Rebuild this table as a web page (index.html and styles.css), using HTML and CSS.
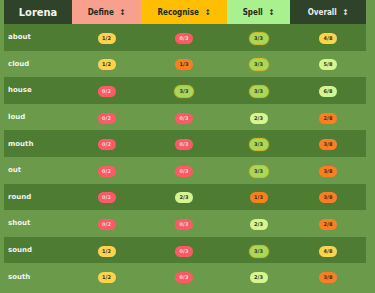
FILE: index.html
```html
<!DOCTYPE html>
<html>
<head>
<meta charset="utf-8">
<link rel="stylesheet" href="styles.css">
</head>
<body>
<table class="grid">
  <colgroup>
    <col class="c-name"><col class="c-def"><col class="c-rec"><col class="c-spell"><col class="c-all">
  </colgroup>
  <thead>
    <tr>
      <th class="h-name">Lorena</th>
      <th class="h-def">Define <span class="sort">↕</span></th>
      <th class="h-rec">Recognise <span class="sort">↕</span></th>
      <th class="h-spell">Spell <span class="sort">↕</span></th>
      <th class="h-all">Overall <span class="sort">↕</span></th>
    </tr>
  </thead>
  <tbody>
    <tr><td class="word">about</td><td><span class="b yel">1/2</span></td><td><span class="b red">0/3</span></td><td><span class="b glow">3/3</span></td><td><span class="b yel">4/8</span></td></tr>
    <tr><td class="word">cloud</td><td><span class="b yel">1/2</span></td><td><span class="b org">1/3</span></td><td><span class="b glow">3/3</span></td><td><span class="b lg">5/8</span></td></tr>
    <tr><td class="word">house</td><td><span class="b red">0/2</span></td><td><span class="b glow">3/3</span></td><td><span class="b glow">3/3</span></td><td><span class="b lg">6/8</span></td></tr>
    <tr><td class="word">loud</td><td><span class="b red">0/2</span></td><td><span class="b red">0/3</span></td><td><span class="b lg">2/3</span></td><td><span class="b org">2/8</span></td></tr>
    <tr><td class="word">mouth</td><td><span class="b red">0/2</span></td><td><span class="b red">0/3</span></td><td><span class="b glow">3/3</span></td><td><span class="b org">3/8</span></td></tr>
    <tr><td class="word">out</td><td><span class="b red">0/2</span></td><td><span class="b red">0/3</span></td><td><span class="b glow">3/3</span></td><td><span class="b org">3/8</span></td></tr>
    <tr><td class="word">round</td><td><span class="b red">0/2</span></td><td><span class="b lg">2/3</span></td><td><span class="b org">1/3</span></td><td><span class="b org">3/8</span></td></tr>
    <tr><td class="word">shout</td><td><span class="b red">0/2</span></td><td><span class="b red">0/3</span></td><td><span class="b lg">2/3</span></td><td><span class="b org">2/8</span></td></tr>
    <tr><td class="word">sound</td><td><span class="b yel">1/2</span></td><td><span class="b red">0/3</span></td><td><span class="b glow">3/3</span></td><td><span class="b yel">4/8</span></td></tr>
    <tr><td class="word">south</td><td><span class="b yel">1/2</span></td><td><span class="b red">0/3</span></td><td><span class="b lg">2/3</span></td><td><span class="b org">3/8</span></td></tr>
  </tbody>
</table>
</body>
</html>
```
FILE: styles.css
```css
html, body {
  margin: 0;
  padding: 0;
  background: #6a9a4a;
}
body {
  padding: 0 4px;
  font-family: "DejaVu Sans", "Liberation Sans", sans-serif;
}
.grid {
  border-collapse: collapse;
  table-layout: fixed;
  width: 362px;
}
.c-name { width: 68px; }
.c-def { width: 69px; }
.c-rec { width: 86px; }
.c-spell { width: 63px; }
.c-all { width: 76px; }

th {
  height: 24px;
  padding: 0;
  font-size: 8px;
  font-weight: bold;
  color: #1e2a1a;
  text-align: center;
  vertical-align: middle;
  font-stretch: condensed;
}
.sort { font-size: 8px; margin-left: 3px; }
.h-name { background: #2e4329; color: #f4f4f0; font-size: 11px; font-weight: bold; }
.h-def { background: #f7a08e; }
.h-rec { background: #ffbf00; }
.h-spell { background: #a9f08f; }
.h-all { background: #2e4329; color: #ecefe8; }

td {
  height: 26.6px;
  padding: 0;
  text-align: center;
  vertical-align: middle;
}
tbody tr:nth-child(odd) { background: #4e7c33; }
tbody tr:nth-child(even) { background: #6a9a4a; }
td.word {
  text-align: left;
  padding-left: 4px;
  color: #f2f4ee;
  font-size: 7px;
  font-weight: bold;
}
.b {
  display: inline-block;
  width: 18px;
  height: 11px;
  line-height: 11px;
  border-radius: 6px;
  font-size: 5px;
  font-weight: bold;
  color: #3a2e2a;
  text-align: center;
  vertical-align: middle;
}
.yel { background: #ffd34e; }
.red { background: #ff5a66; color: #f4dcdc; }
.org { background: #ff7f1e; }
.lg { background: #d5f58e; }
.glow { background: #a8d85a; box-shadow: 0 0 1px 1px #d8c028; }
```
